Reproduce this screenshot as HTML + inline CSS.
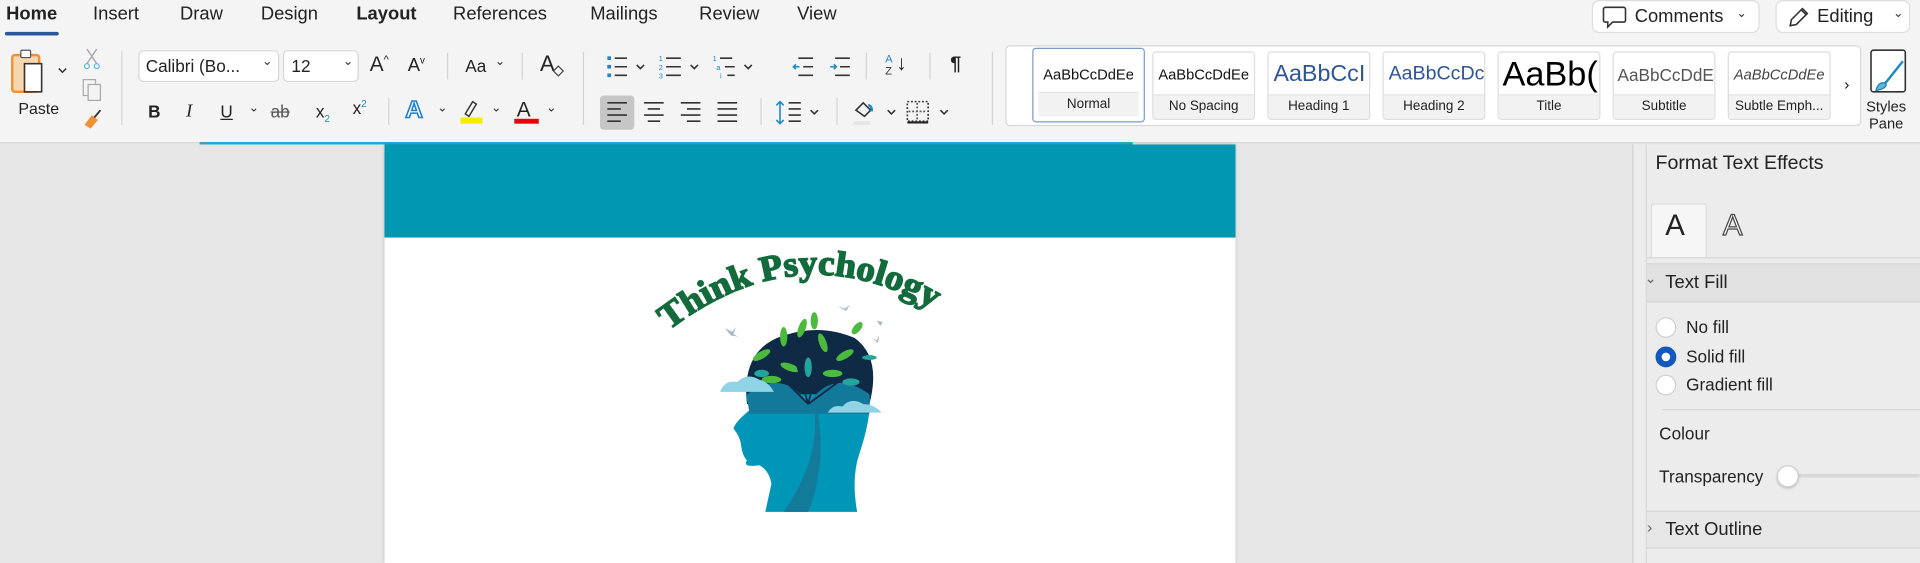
<!DOCTYPE html>
<html><head><meta charset="utf-8"><style>
*{margin:0;padding:0;box-sizing:border-box}
html,body{width:1920px;height:563px;overflow:hidden;background:#e6e6e6;font-family:"Liberation Sans",sans-serif;color:#222}
#s{position:absolute;left:0;top:0;width:1568px;height:460px;transform:scale(1.22449);transform-origin:0 0;background:#e6e6e6}
.a{position:absolute}
.t{position:absolute;font-size:15px;color:#222;white-space:nowrap}
.ib{position:absolute;font-size:14px;color:#222;white-space:nowrap}
.sep{position:absolute;width:1px;background:#d4d4d4}
.tile{position:absolute;top:42px;width:84px;height:56px;background:#fff;border:1px solid #ddd;border-radius:3px;overflow:hidden}
.tile .p{position:absolute;top:0;left:0;right:0;height:36px;display:flex;align-items:center;justify-content:center;font-size:12px;color:#111;white-space:nowrap;overflow:hidden}
.tile .l{position:absolute;bottom:0;left:0;right:0;height:20px;background:#f2f2f2;border-top:1px solid #e4e4e4;font-size:11px;text-align:center;line-height:19px;color:#222;white-space:nowrap}
.chev{position:absolute;font-size:10px;color:#333}
.rad{position:absolute;width:17px;height:17px;border-radius:50%;background:#fff;border:1px solid #cfcfcf}
</style></head><body><div id="s">
<div class="a" style="left:0;top:0;width:1568px;height:117px;background:#f4f4f4;border-bottom:1px solid #d6d6d6"></div>
<div class="a" style="left:163px;top:116px;width:762px;height:2px;background:#2aa8c4"></div>
<div class="t" style="left:5px;top:3px;font-weight:bold">Home</div>
<div class="a" style="left:4px;top:26px;width:44px;height:3px;background:#2b579a;border-radius:2px"></div>
<div class="t" style="left:76px;top:3px">Insert</div>
<div class="t" style="left:147px;top:3px">Draw</div>
<div class="t" style="left:213px;top:3px">Design</div>
<div class="t" style="left:291px;top:3px;font-weight:bold">Layout</div>
<div class="t" style="left:370px;top:3px">References</div>
<div class="t" style="left:482px;top:3px">Mailings</div>
<div class="t" style="left:571px;top:3px">Review</div>
<div class="t" style="left:651px;top:3px">View</div>
<div class="a" style="left:1300px;top:0;width:137px;height:27px;background:#fff;border:1px solid #ddd;border-radius:6px"></div>
<svg class="a" style="left:1308px;top:4px" width="22" height="20"><path d="M3 2h15a1.5 1.5 0 0 1 1.5 1.5v9a1.5 1.5 0 0 1-1.5 1.5H9l-4 4v-4H3a1.5 1.5 0 0 1-1.5-1.5v-9A1.5 1.5 0 0 1 3 2z" fill="none" stroke="#333" stroke-width="1.3"/></svg>
<div class="t" style="left:1335px;top:5px">Comments</div><div class="chev" style="left:1418px;top:6px">&#8964;</div>
<div class="a" style="left:1450px;top:0;width:110px;height:27px;background:#fff;border:1px solid #ddd;border-radius:6px"></div>
<svg class="a" style="left:1459px;top:4px" width="20" height="20"><path d="M3 17l1-5L13 3l4 4-9 9z M12 4l4 4" fill="none" stroke="#333" stroke-width="1.3"/></svg>
<div class="t" style="left:1484px;top:5px">Editing</div><div class="chev" style="left:1546px;top:6px">&#8964;</div>
<svg class="a" style="left:8px;top:40px" width="52" height="40"><rect x="2" y="5" width="22" height="30" rx="2" fill="#f7d7b0" stroke="#f0913a" stroke-width="2"/><rect x="9" y="1" width="8" height="6" rx="1" fill="#fff" stroke="#555"/><rect x="12" y="12" width="14" height="23" fill="#fff" stroke="#333" stroke-width="1.3"/><path d="M40 16l3 3 3-3" fill="none" stroke="#333" stroke-width="1.2"/></svg>
<div class="ib" style="left:15px;top:81px;font-size:13px">Paste</div>
<svg class="a" style="left:65px;top:38px" width="22" height="70"><path d="M6 2l8 12M14 2L6 14" stroke="#aaa" stroke-width="1.2"/><circle cx="6" cy="16" r="2" fill="none" stroke="#5cb8d8"/><circle cx="14" cy="16" r="2" fill="none" stroke="#5cb8d8"/><rect x="3" y="27" width="10" height="13" fill="none" stroke="#aaa"/><rect x="7" y="31" width="10" height="13" fill="#f4f4f4" stroke="#aaa"/><path d="M4 64l6-8 5 4-6 7z" fill="#f0913a"/><path d="M12 58l5-6" stroke="#333" stroke-width="1.5"/></svg>
<div class="sep" style="left:99px;top:42px;height:60px"></div>
<div class="a" style="left:113px;top:41px;width:115px;height:26px;background:#fff;border:1px solid #d6d6d6;border-radius:4px"></div>
<div class="ib" style="left:119px;top:46px">Calibri (Bo...</div><div class="chev" style="left:214px;top:45px">&#8964;</div>
<div class="a" style="left:231px;top:41px;width:62px;height:26px;background:#fff;border:1px solid #d6d6d6;border-radius:4px"></div>
<div class="ib" style="left:238px;top:46px">12</div><div class="chev" style="left:280px;top:45px">&#8964;</div>
<div class="ib" style="left:302px;top:43px;font-size:17px">A<sup style="font-size:9px">^</sup></div>
<div class="ib" style="left:333px;top:45px;font-size:15px">A<sup style="font-size:8px">v</sup></div>
<div class="sep" style="left:365px;top:43px;height:22px"></div>
<div class="ib" style="left:380px;top:46px;font-size:14px">Aa</div><div class="chev" style="left:404px;top:45px">&#8964;</div>
<div class="sep" style="left:426px;top:43px;height:22px"></div>
<div class="ib" style="left:441px;top:42px;font-size:18px">A</div><svg class="a" style="left:450px;top:52px" width="12" height="12"><path d="M2 6l4-4 4 4-4 4z" fill="none" stroke="#444"/></svg>
<div class="ib" style="left:121px;top:83px;font-weight:bold">B</div>
<div class="ib" style="left:152px;top:83px;font-style:italic;font-family:'Liberation Serif',serif;font-size:15px">I</div>
<div class="ib" style="left:180px;top:83px;text-decoration:underline">U</div><div class="chev" style="left:203px;top:83px">&#8964;</div>
<div class="ib" style="left:221px;top:83px;text-decoration:line-through;color:#555">ab</div>
<div class="ib" style="left:258px;top:83px">x<sub style="font-size:8px;color:#1d8ac4">2</sub></div>
<div class="ib" style="left:288px;top:80px">x<sup style="font-size:8px;color:#1d8ac4">2</sup></div>
<div class="sep" style="left:317px;top:80px;height:22px"></div>
<div class="ib" style="left:331px;top:79px;font-size:20px;font-weight:bold;color:#fff;-webkit-text-stroke:1.3px #1f7fd0">A</div><div class="chev" style="left:357px;top:83px">&#8964;</div>
<svg class="a" style="left:374px;top:80px" width="22" height="22"><path d="M6 13l6-10 3 2-6 10z" fill="none" stroke="#333" stroke-width="1.2"/><rect x="2" y="16" width="18" height="5" fill="#f5eb00"/></svg><div class="chev" style="left:401px;top:83px">&#8964;</div>
<div class="ib" style="left:422px;top:80px;font-size:17px">A</div><div class="a" style="left:420px;top:97px;width:20px;height:4px;background:#e8000b"></div><div class="chev" style="left:446px;top:83px">&#8964;</div>
<div class="sep" style="left:476px;top:42px;height:60px"></div>
<svg class="a" style="left:494px;top:44px" width="310" height="22" fill="none" stroke="#333" stroke-width="1.3">
<g><rect x="2" y="2" width="3" height="3" fill="#1d8ac4" stroke="none"/><rect x="2" y="9" width="3" height="3" fill="#1d8ac4" stroke="none"/><rect x="2" y="16" width="3" height="3" fill="#1d8ac4" stroke="none"/><path d="M8 3.5h10M8 10.5h10M8 17.5h10"/><path d="M26 9l3 3 3-3"/></g>
<g transform="translate(44,0)"><text x="0" y="6" font-size="6" fill="#1d8ac4" stroke="none">1</text><text x="0" y="13" font-size="6" fill="#1d8ac4" stroke="none">2</text><text x="0" y="20" font-size="6" fill="#1d8ac4" stroke="none">3</text><path d="M6 3.5h12M6 10.5h12M6 17.5h12"/><path d="M26 9l3 3 3-3"/></g>
<g transform="translate(88,0)"><text x="0" y="6" font-size="6" fill="#1d8ac4" stroke="none">1</text><text x="3" y="13" font-size="6" fill="#1d8ac4" stroke="none">a</text><text x="6" y="20" font-size="6" fill="#1d8ac4" stroke="none">i</text><path d="M6 3.5h10M10 10.5h8M12 17.5h6"/><path d="M26 9l3 3 3-3"/></g>
<g transform="translate(152,0)"><path d="M6 3.5h12M10 10.5h8M6 17.5h12"/><path d="M7 10.5h-5M4 8.5l-2 2 2 2" stroke="#1d8ac4"/></g>
<g transform="translate(182,0)"><path d="M6 3.5h12M10 10.5h8M6 17.5h12"/><path d="M2 10.5h5M5 8.5l2 2-2 2" stroke="#1d8ac4"/></g>
</svg>
<div class="sep" style="left:707px;top:43px;height:22px"></div>
<div class="ib" style="left:723px;top:43px;font-size:9px;line-height:10px;color:#1d8ac4">A<br><span style="color:#333">Z</span></div><div class="ib" style="left:732px;top:42px;font-size:17px">&#8595;</div>
<div class="sep" style="left:759px;top:43px;height:22px"></div>
<div class="ib" style="left:776px;top:44px;font-size:16px;font-weight:bold">&#182;</div>
<div class="a" style="left:490px;top:78px;width:28px;height:28px;background:#c6c6c6;border-radius:3px"></div>
<svg class="a" style="left:493px;top:81px" width="130" height="22" fill="none" stroke="#333" stroke-width="1.3">
<path d="M3 3h16M3 8h11M3 13h16M3 18h11"/>
<path d="M33 3h16M36 8h10M33 13h16M36 18h10"/>
<path d="M63 3h16M68 8h11M63 13h16M68 18h11"/>
<path d="M93 3h16M93 8h16M93 13h16M93 18h16"/>
</svg>
<div class="sep" style="left:621px;top:80px;height:22px"></div>
<svg class="a" style="left:632px;top:81px" width="40" height="22" fill="none" stroke-width="1.3"><path d="M5 2v18M2 5l3-3 3 3M2 17l3 3 3-3" stroke="#1d8ac4"/><path d="M12 3h10M12 8h10M12 13h10M12 18h10" stroke="#333"/><path d="M30 9l3 3 3-3" stroke="#333"/></svg>
<div class="sep" style="left:683px;top:80px;height:22px"></div>
<svg class="a" style="left:695px;top:80px" width="90" height="24" fill="none" stroke-width="1.3"><path d="M4 10l6-6 6 6-5 5z" stroke="#333"/><path d="M14 6q3 0 3 5" stroke="#1d8ac4" stroke-width="2"/><rect x="2" y="19" width="14" height="3" fill="#e6e6e6" stroke="none"/><path d="M30 10l3 3 3-3" stroke="#333"/><rect x="46" y="3" width="17" height="16" stroke="#333" stroke-dasharray="1.5 1.5"/><path d="M46 20h17" stroke="#222" stroke-width="1.8"/><path d="M54 4v14M47 11h15" stroke="#555" stroke-dasharray="1.5 1.5"/><path d="M73 10l3 3 3-3" stroke="#333"/></svg>
<div class="sep" style="left:810px;top:42px;height:60px"></div>
<div class="a" style="left:821px;top:37px;width:699px;height:66px;background:#fff;border:1px solid #d8d8d8;border-radius:4px"></div>
<div class="tile" style="left:843px;width:92px;border:1px solid #7a9ccc;top:39px;height:61px"><div class="p" style="top:3px">AaBbCcDdEe</div><div class="l" style="left:4px;right:4px;bottom:4px">Normal</div></div>
<div class="tile" style="left:941px"><div class="p">AaBbCcDdEe</div><div class="l">No Spacing</div></div>
<div class="tile" style="left:1035px"><div class="p" style="font-size:19px;color:#2f5597;justify-content:flex-start;padding-left:4px">AaBbCcI</div><div class="l">Heading 1</div></div>
<div class="tile" style="left:1129px"><div class="p" style="font-size:16px;color:#2f5597;justify-content:flex-start;padding-left:4px">AaBbCcDc</div><div class="l">Heading 2</div></div>
<div class="tile" style="left:1223px"><div class="p" style="font-size:28px;color:#000;justify-content:flex-start;padding-left:3px">AaBb(</div><div class="l">Title</div></div>
<div class="tile" style="left:1317px"><div class="p" style="font-size:14px;color:#555;justify-content:flex-start;padding-left:3px">AaBbCcDdE</div><div class="l">Subtitle</div></div>
<div class="tile" style="left:1411px"><div class="p" style="font-style:italic;color:#444">AaBbCcDdEe</div><div class="l">Subtle Emph...</div></div>
<div class="ib" style="left:1506px;top:61px;font-size:13px">&#8250;</div>
<svg class="a" style="left:1526px;top:40px" width="34" height="38"><rect x="2" y="1" width="28" height="34" rx="2" fill="#fff" stroke="#333" stroke-width="1.3"/><path d="M12 30l16-20" stroke="#1d8ac4" stroke-width="2"/><path d="M6 34q2-8 8-6 2 4-8 6z" fill="#5cb8d8" stroke="#1d7ab4"/></svg>
<div class="ib" style="left:1524px;top:80px;font-size:12px;line-height:14px;text-align:center">Styles<br>Pane</div>
<div class="a" style="left:314px;top:118px;width:695px;height:342px;background:#fff;box-shadow:0 0 3px rgba(0,0,0,.2)"></div>
<div class="a" style="left:314px;top:118px;width:695px;height:76px;background:#0097b2"></div>
<svg class="a" style="left:530px;top:200px" width="240" height="222" viewBox="530 200 240 222">
<defs><path id="arc" d="M546 270 Q650 190 758 250"/></defs>
<text font-family="Liberation Serif,serif" font-weight="bold" font-size="29" fill="#136b3c" stroke="#136b3c" stroke-width="1.2" textLength="232" lengthAdjust="spacingAndGlyphs"><textPath href="#arc">Think Psychology</textPath></text>
<path d="M610 330 Q605 285 640 274 Q670 264 698 276 Q720 292 710 330 Z" fill="#0e2a45"/>
<path d="M609 322 L612 335 Q600 345 599 350 Q604 356 605 362 Q606 372 610 376 Q606 382 620 380 Q628 384 630 395 L625 418 L700 418 Q695 390 702 370 Q712 340 710 322 Z" fill="#0096b8"/>
<path d="M665 335 Q670 375 640 418 L660 418 Q675 380 668 338 Z" fill="#137a9a"/>
<path d="M610 322 Q640 300 660 330 Q680 300 710 322 L710 338 L612 338 Z" fill="#12799b"/>
<g fill="#4cba3c"><ellipse cx="622" cy="290" rx="8" ry="3" transform="rotate(-30 622 290)"/><ellipse cx="640" cy="275" rx="3" ry="8"/><ellipse cx="655" cy="268" rx="3" ry="8" transform="rotate(20 655 268)"/><ellipse cx="672" cy="280" rx="3" ry="8" transform="rotate(-20 672 280)"/><ellipse cx="690" cy="290" rx="8" ry="3" transform="rotate(-30 690 290)"/><ellipse cx="645" cy="300" rx="8" ry="3" transform="rotate(20 645 300)"/><ellipse cx="680" cy="305" rx="8" ry="3"/><ellipse cx="630" cy="310" rx="8" ry="3"/><ellipse cx="665" cy="262" rx="3" ry="7"/><ellipse cx="700" cy="268" rx="3" ry="6" transform="rotate(40 700 268)"/></g>
<g fill="#24a59b"><ellipse cx="660" cy="300" rx="3" ry="8"/><ellipse cx="695" cy="312" rx="7" ry="3"/><ellipse cx="622" cy="305" rx="6" ry="3"/><ellipse cx="710" cy="292" rx="6" ry="2"/></g>
<path d="M660 330 L650 295 M660 330 L670 290 M660 330 L635 305 M660 330 L690 308" stroke="#0e2a45" stroke-width="1.5"/>
<path d="M588 320 Q592 310 602 312 Q610 304 620 310 Q628 312 632 320 Z" fill="#8fd3e4"/>
<path d="M676 337 Q680 330 688 332 Q695 324 705 330 Q714 330 720 337 Z" fill="#8fd3e4"/>
<g fill="#a8b8c4"><path d="M592 268l6 3 3-4-2 6 4 2-6-1z"/><path d="M684 250l6 2 4-3-3 5z"/><path d="M712 276l4 2 2-4-1 6z"/><path d="M716 262l3 4 2-3z"/></g>
</svg>
<div class="a" style="left:1333px;top:118px;width:235px;height:342px;background:#ececec;border-left:1px solid #d0d0d0"></div>
<div class="a" style="left:1344px;top:118px;width:1px;height:342px;background:#d8d8d8"></div>
<div class="t" style="left:1352px;top:125px;font-size:16px">Format Text Effects</div>
<div class="a" style="left:1348px;top:166px;width:46px;height:45px;background:#f6f6f6;border:1px solid #d8d8d8;border-bottom:none;border-radius:3px 3px 0 0"></div>
<div class="a" style="left:1345px;top:210px;width:223px;height:1px;background:#d6d6d6"></div>
<div class="ib" style="left:1360px;top:171px;font-size:24px;color:#222">A</div>
<div class="ib" style="left:1407px;top:171px;font-size:24px;color:#fff;-webkit-text-stroke:1px #444">A</div>
<div class="a" style="left:1345px;top:215px;width:223px;height:32px;background:#e1e1e1;border-top:1px solid #d6d6d6;border-bottom:1px solid #d6d6d6"></div>
<div class="chev" style="left:1343px;top:220px;font-size:12px;color:#666">&#8964;</div>
<div class="t" style="left:1360px;top:222px;font-size:15px">Text Fill</div>
<div class="rad" style="left:1352px;top:259px"></div><div class="t" style="left:1377px;top:259px;font-size:14px">No fill</div>
<div class="rad" style="left:1352px;top:283px;border:5px solid #1458bd"></div><div class="t" style="left:1377px;top:283px;font-size:14px">Solid fill</div>
<div class="rad" style="left:1352px;top:306px"></div><div class="t" style="left:1377px;top:306px;font-size:14px">Gradient fill</div>
<div class="a" style="left:1358px;top:334px;width:210px;height:1px;background:#d6d6d6"></div>
<div class="t" style="left:1355px;top:346px;font-size:14px">Colour</div>
<div class="t" style="left:1355px;top:381px;font-size:14px">Transparency</div>
<div class="a" style="left:1460px;top:387px;width:108px;height:3px;background:#d8d8d8;border-radius:2px"></div>
<div class="rad" style="left:1451px;top:380px;width:18px;height:18px;box-shadow:0 1px 2px rgba(0,0,0,.2)"></div>
<div class="a" style="left:1345px;top:417px;width:223px;height:31px;background:#e6e6e6;border-top:1px solid #d6d6d6;border-bottom:1px solid #d6d6d6"></div>
<div class="t" style="left:1345px;top:423px;font-size:13px;color:#666">&#8250;</div>
<div class="t" style="left:1360px;top:424px;font-size:15px">Text Outline</div>
</div></body></html>
